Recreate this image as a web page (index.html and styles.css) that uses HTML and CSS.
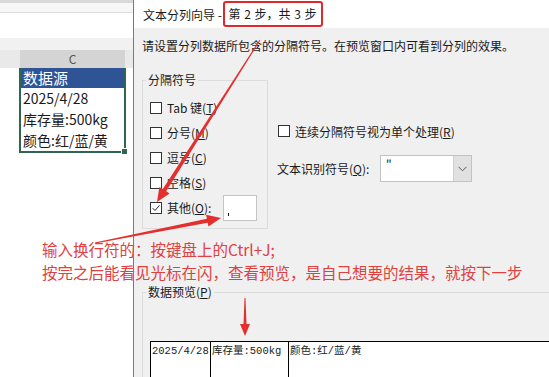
FILE: index.html
```html
<!DOCTYPE html>
<html lang="zh-CN">
<head>
    <meta charset="UTF-8">
    <meta name="viewport" content="width=device-width, initial-scale=1.0">
    <title>文本分列向导</title>
    <link rel="stylesheet" href="styles.css">
</head>
<body>
    <div class="sheet">
        <div class="sheet-top"></div>
        <div class="sheet-bar"></div>
        <div class="col-heads"><div class="col-c">C</div></div>
        <div class="range">
            <div class="cell cell-head">数据源</div>
            <div class="cell">2025/4/28</div>
            <div class="cell">库存量:500kg</div>
            <div class="cell">颜色:红/蓝/黄</div>
            <span class="fill-handle"></span>
        </div>
    </div>

    <div class="dialog">
        <div class="title">文本分列向导 - <span class="step">第 2 步，共 3 步</span></div>
        <div class="body">
            <p class="intro">请设置分列数据所包含的分隔符号。在预览窗口内可看到分列的效果。</p>
            <div class="options">
                <fieldset class="delims">
                    <legend>分隔符号</legend>
                    <div class="checks">
                        <div class="check"><span class="box"></span>Tab 键(<u>T</u>)</div>
                        <div class="check"><span class="box"></span>分号(<u>M</u>)</div>
                        <div class="check"><span class="box"></span>逗号(<u>C</u>)</div>
                        <div class="check"><span class="box"></span>空格(<u>S</u>)</div>
                        <div class="check">
                            <span class="box">
                                <svg width="12" height="12" viewBox="0 0 12 12"><path d="M2 6.2 L4.8 9 L10.2 2.8" fill="none" stroke="#222" stroke-width="1.2"/></svg>
                            </span>其他(<u>O</u>):
                            <span class="other-input"><i class="caret"></i></span>
                        </div>
                    </div>
                </fieldset>
                <div class="side">
                    <div class="check"><span class="box"></span>连续分隔符号视为单个处理(<u>R</u>)</div>
                    <div class="qualifier">
                        <span class="q-label">文本识别符号(<u>Q</u>):</span>
                        <span class="combo">
                            <span class="combo-value">"</span>
                            <span class="combo-btn">
                                <svg width="9" height="6" viewBox="0 0 9 6"><path d="M0.5 0.8 L4.5 4.8 L8.5 0.8" fill="none" stroke="#555" stroke-width="1"/></svg>
                            </span>
                        </span>
                    </div>
                </div>
            </div>
            <fieldset class="preview">
                <legend>数据预览(<u>P</u>)</legend>
                <div class="preview-table">
                    <div class="pcol pcol-date">2025/4/28</div>
                    <div class="pcol pcol-stock">库存量:500kg</div>
                    <div class="pcol pcol-color">颜色:红/蓝/黄</div>
                </div>
            </fieldset>
        </div>
    </div>

    <!-- annotations drawn over the screenshot -->
    <div class="note">输入换行符的：按键盘上的Ctrl+J;<br>按完之后能看见光标在闪，查看预览，是自己想要的结果，就按下一步</div>
    <svg class="arrows" width="549" height="377" viewBox="0 0 549 377">
        <polygon points="260.4,40.3 166.2,191.3 169.6,193.4 157,202 159.4,187 162.8,189.1 259.6,39.7" />
        <polygon points="94.9,242.5 206.9,218.7 206.1,214.8 221,218 208.5,226.6 207.7,222.7 95.1,243.5" />
        <polygon points="244.5,298 245.5,298 246.5,324 250,324 245,336 240,324 243.5,324" />
    </svg>
</body>
</html>
```

FILE: styles.css
```css
body {
    margin: 0;
    width: 549px;
    height: 377px;
    overflow: hidden;
    display: flex;
    position: relative;
    font-family: "Noto Sans CJK SC", "Noto Sans", sans-serif;
    color: #1a1a1a;
    background-color: #fff;
}

/* excel sheet on the left */
.sheet {
    width: 133px;
    flex: none;
    background-color: #fff;
}

.sheet-top {
    height: 3px;
    background-color: #d9d9d9;
    border-bottom: 9px solid #f7f7f7;
}

.sheet-bar {
    height: 25px;
    border-top: 1px solid #dedede;
    border-bottom: 12px solid #f1f1f1;
}

.col-heads {
    height: 18px;
    background-color: #e9e9e9;
}

.col-c {
    margin-left: 20px;
    width: 105px;
    height: 18px;
    background-color: #d4d4d4;
    color: #555;
    font-size: 12px;
    line-height: 18px;
    text-align: center;
}

.range {
    position: relative;
    margin-left: 19px;
    width: 103px;
    border: 2px solid #2f6650;
    border-top: none;
}

.cell {
    height: 21px;
    line-height: 21px;
    font-size: 14px;
    padding-left: 2px;
    white-space: nowrap;
}

.cell-head {
    height: 20px;
    line-height: 20px;
    background-color: #2f5496;
    color: #fff;
    font-size: 15px;
}

.fill-handle {
    position: absolute;
    right: -4px;
    bottom: -4px;
    width: 5px;
    height: 5px;
    background-color: #2f6650;
    border: 1px solid #fff;
}

/* text to columns dialog */
.dialog {
    flex: 1;
    min-width: 0;
    border-left: 1px solid #7a7a7a;
    display: flex;
    flex-direction: column;
    font-size: 12px;
}

.title {
    height: 28px;
    flex: none;
    display: flex;
    align-items: center;
    padding-left: 9px;
    background-color: #fff;
    font-size: 12px;
    white-space: pre;
}

.step {
    margin-left: -2px;
    padding: 2px 4px 3px 4px;
    border: 2px solid #e0282a;
    border-radius: 3px;
    word-spacing: 1px;
}

.body {
    flex: 1;
    background-color: #f0f0f0;
    padding-left: 8px;
    overflow: hidden;
}

.intro {
    margin: 10px 0 0 0;
    line-height: 16px;
    white-space: nowrap;
}

.options {
    display: flex;
    margin-top: 18px;
}

fieldset {
    margin: 0;
    padding: 0;
    border: 1px solid #dcdcdc;
}

legend {
    margin-left: 3px;
    padding: 0 2px;
    line-height: 16px;
}

.delims {
    width: 126px;
    height: 157px;
    box-sizing: border-box;
}

.checks {
    padding: 7px 0 0 7px;
}

.check {
    height: 25px;
    display: flex;
    align-items: center;
    white-space: nowrap;
}

.box {
    width: 12px;
    height: 12px;
    box-sizing: border-box;
    border: 1px solid #333;
    background-color: #fff;
    margin-right: 5px;
    display: flex;
    align-items: center;
    justify-content: center;
    flex: none;
}

.box svg {
    display: block;
}

.other-input {
    position: relative;
    width: 34px;
    height: 26px;
    box-sizing: border-box;
    margin-left: 12px;
    background-color: #fff;
    border: 1px solid #c4c4c4;
}

.caret {
    position: absolute;
    left: 4px;
    bottom: 4px;
    width: 1px;
    height: 3px;
    background-color: #111;
}

.side {
    margin-left: 10px;
    padding-top: 49px;
}

.side .check {
    height: 20px;
}

.qualifier {
    display: flex;
    align-items: center;
    margin-top: 14px;
    margin-left: -1px;
}

.q-label {
    width: 103px;
    flex: none;
}

.combo {
    display: flex;
    width: 92px;
    height: 27px;
    box-sizing: border-box;
    border: 1px solid #c2c2c2;
    background-color: #fff;
}

.combo-value {
    flex: 1;
    padding: 3px 0 0 5px;
    line-height: 12px;
}

.combo-btn {
    width: 17px;
    background-color: #e1e1e1;
    border-left: 1px solid #cfcfcf;
    display: flex;
    align-items: center;
    justify-content: center;
}

.preview {
    margin-top: 55px;
    height: 93px;
    box-sizing: border-box;
    border-right: none;
    border-bottom: none;
}

.preview-table {
    display: flex;
    height: 36px;
    margin: 41px 0 0 7px;
    border: 1px solid #000;
    border-right: none;
    border-bottom: none;
    background-color: #fff;
    font-family: "Liberation Mono", "Noto Sans CJK SC", monospace;
    font-size: 10.5px;
}

.pcol {
    padding: 2px 0 0 1px;
    line-height: 14px;
    white-space: nowrap;
    border-right: 1px solid #000;
    box-sizing: border-box;
}

.pcol-date {
    width: 60px;
}

.pcol-stock {
    width: 78px;
}

.pcol-color {
    flex: 1;
    border-right: none;
}

/* red annotations */
.note {
    position: absolute;
    left: 42px;
    top: 238px;
    color: #e0403f;
    font-size: 15.5px;
    line-height: 23px;
    white-space: nowrap;
}

.arrows {
    position: absolute;
    left: 0;
    top: 0;
    pointer-events: none;
}

.arrows polygon {
    fill: #e3302d;
}
```
